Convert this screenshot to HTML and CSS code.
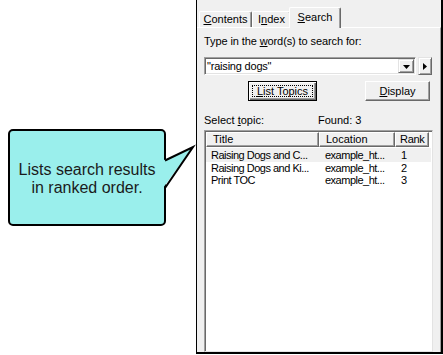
FILE: index.html
```html
<!DOCTYPE html>
<html>
<head>
<title>Search Tab</title>
<link rel="stylesheet" href="styles.css">
</head>
<body>

<div class="page">
	<div class="note-area">
		<div class="callout">
			<p class="callout-text">Lists search results<br>in ranked order.</p>
			<svg class="pointer" width="34" height="47" viewBox="0 0 34 47">
				<polygon points="0,16.5 30,3 0,44" fill="#9aefec"/>
				<polyline points="2,16.5 30,3 2,44" fill="none" stroke="#000" stroke-width="2" stroke-linejoin="miter"/>
			</svg>
		</div>
	</div>

	<div class="window">
		<div class="tabs">
			<div class="tab tab-contents"><u>C</u>ontents</div>
			<div class="tab tab-index">I<u>n</u>dex</div>
			<div class="tab tab-search selected"><u>S</u>earch</div>
		</div>

		<div class="panel">
			<p class="prompt">Type in the <u>w</u>ord(s) to search for:</p>

			<div class="search-row">
				<div class="combo">
					<span class="combo-text">"raising dogs"</span>
					<span class="drop-btn">
						<svg width="7" height="4" viewBox="0 0 7 4"><polygon points="0,0 7,0 3.5,4" fill="#000"/></svg>
					</span>
				</div>
				<div class="arrow-btn">
					<svg width="4" height="7" viewBox="0 0 4 7"><polygon points="0,0 4,3.5 0,7" fill="#000"/></svg>
				</div>
			</div>

			<div class="button-row">
				<div class="btn default"><span class="focus"><u>L</u>ist Topics</span></div>
				<div class="btn btn-display"><u>D</u>isplay</div>
			</div>

			<div class="status-row">
				<span class="status-label">Select <u>t</u>opic:</span>
				<span>Found: 3</span>
			</div>

			<div class="list">
				<div class="list-head">
					<div class="head-cell col-title">Title</div>
					<div class="head-cell col-location">Location</div>
					<div class="head-cell col-rank">Rank</div>
				</div>
				<div class="list-row hot">
					<span class="cell-title">Raising Dogs and C...</span>
					<span class="cell-location">example_ht...</span>
					<span class="cell-rank">1</span>
				</div>
				<div class="list-row">
					<span class="cell-title">Raising Dogs and Ki...</span>
					<span class="cell-location">example_ht...</span>
					<span class="cell-rank">2</span>
				</div>
				<div class="list-row">
					<span class="cell-title">Print TOC</span>
					<span class="cell-location">example_ht...</span>
					<span class="cell-rank">3</span>
				</div>
			</div>
		</div>
	</div>
</div>

</body>
</html>
```

FILE: styles.css
```css
body, html {
  margin: 0;
  padding: 0;
  background: #fff;
  font-family: "Liberation Sans", Arial, sans-serif;
}

.page {
	display: flex;
	height: 355px;
}

/* callout on the left */
.note-area {
	width: 196px;
	flex: none;
	padding: 129px 0 0 8px;
	box-sizing: border-box;
}

.callout {
	position: relative;
	width: 158px;
	height: 97px;
	box-sizing: border-box;
	border: 2px solid #000;
	border-radius: 5px;
	background: #9aefec;
	display: flex;
	align-items: center;
	justify-content: center;
}

.callout-text {
	margin: 2px 0 0 0;
	text-align: center;
	font-size: 16px;
	line-height: 18px;
	color: #1b1b1b;
}

.pointer {
	position: absolute;
	left: 153px;
	top: 13px;
	overflow: visible;
}

/* help window */
.window {
	width: 247px;
	height: 354px;
	flex: none;
	box-sizing: border-box;
	border-left: 1px solid #000;
	border-right: 2px solid #000;
	border-bottom: 2px solid #000;
	background: #f0f0f0;
	display: flex;
	flex-direction: column;
	font-size: 11px;
	color: #000;
}

.tabs {
	display: flex;
	align-items: flex-end;
	padding: 7px 0 0 2px;
	height: 20px;
}

.tab {
	height: 16px;
	box-sizing: border-box;
	border-top: 1px solid #fff;
	border-left: 1px solid #fff;
	border-right: 1px solid #696969;
	border-radius: 2px 2px 0 0;
	box-shadow: inset -1px 0 #a0a0a0;
	display: flex;
	align-items: center;
	justify-content: center;
	line-height: 13px;
}

.tab-contents { width: 53px; }
.tab-index { width: 39px; }

.tab-search {
	width: 52px;
	margin: 0 -2px -1px -2px;
}

.tab.selected {
	height: 21px;
	position: relative;
	z-index: 1;
	background: #f0f0f0;
	padding-bottom: 2px;
}

.panel {
	flex: 1;
	display: flex;
	flex-direction: column;
	border-top: 1px solid #fff;
	border-right: 1px solid #a0a0a0;
	padding: 0 7px;
	min-height: 0;
}

.prompt {
	margin: 7px 0 0 0;
	line-height: 13px;
	letter-spacing: -0.1px;
}

.search-row {
	display: flex;
	gap: 2px;
	margin-top: 9px;
}

.combo {
	width: 212px;
	height: 18px;
	box-sizing: border-box;
	background: #fff;
	border: 1px solid;
	border-color: #a0a0a0 #fff #fff #a0a0a0;
	box-shadow: inset 1px 1px #696969, inset -1px -1px #e3e3e3;
	display: flex;
	align-items: center;
	padding: 1px 1px 1px 2px;
}

.combo-text {
	flex: 1;
	line-height: 13px;
	letter-spacing: -0.2px;
}

.drop-btn, .arrow-btn {
	box-sizing: border-box;
	background: #f0f0f0;
	border: 1px solid;
	border-color: #e3e3e3 #696969 #696969 #e3e3e3;
	box-shadow: inset 1px 1px #fff, inset -1px -1px #a0a0a0;
	display: flex;
	align-items: center;
	justify-content: center;
}

.drop-btn {
	width: 16px;
	height: 14px;
}

.drop-btn svg {
	margin-top: 1px;
}

.arrow-btn {
	width: 14px;
	height: 18px;
}

.button-row {
	display: flex;
	gap: 48px;
	padding-left: 44px;
	margin-top: 6px;
}

.btn {
	height: 20px;
	box-sizing: border-box;
	background: #f0f0f0;
	border: 1px solid;
	border-color: #fff #696969 #696969 #fff;
	box-shadow: inset -1px -1px #a0a0a0;
	display: flex;
	align-items: center;
	justify-content: center;
	line-height: 13px;
}

.btn.default {
	width: 69px;
	border-color: #000;
	box-shadow: inset 1px 1px #fff, inset -1px -1px #696969, inset -2px -2px #a0a0a0;
	align-items: stretch;
	padding: 3px;
}

.focus {
	flex: 1;
	border: 1px dotted #000;
	display: flex;
	align-items: center;
	justify-content: center;
}

.btn-display {
	width: 65px;
}

.status-row {
	display: flex;
	margin-top: 13px;
	line-height: 13px;
}

.status-label {
	width: 114px;
}

.list {
	flex: 1;
	margin-top: 3px;
	background: #fff;
	border: 1px solid;
	border-color: #a0a0a0 #e3e3e3 #e3e3e3 #a0a0a0;
	box-shadow: inset 1px 1px #696969;
	padding: 1px 0 0 1px;
}

.list-head {
	display: flex;
	height: 15px;
}

.head-cell {
	box-sizing: border-box;
	background: #f0f0f0;
	border: 1px solid;
	border-color: #fff #696969 #696969 #fff;
	box-shadow: inset -1px -1px #a0a0a0;
	padding-left: 6px;
	line-height: 13px;
	overflow: hidden;
	white-space: nowrap;
}

.col-title { width: 113px; }
.col-location { width: 76px; }

.col-rank {
	width: 34px;
	padding-left: 4px;
	letter-spacing: -0.3px;
}

.list-row {
	display: flex;
	height: 12px;
	line-height: 12px;
	margin-right: 1px;
	letter-spacing: -0.5px;
	white-space: nowrap;
}

.list-row.hot {
	margin-top: 1px;
	height: 14px;
	line-height: 14px;
	background: #f0f0f0;
}

.cell-title {
	width: 119px;
	padding-left: 5px;
	box-sizing: border-box;
}

.cell-location {
	width: 76px;
}
```
